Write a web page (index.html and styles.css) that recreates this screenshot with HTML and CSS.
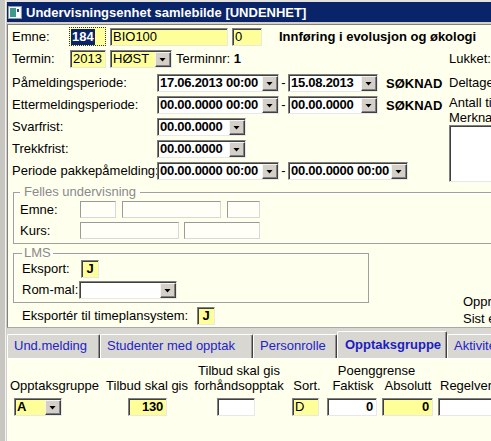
FILE: index.html
```html
<!DOCTYPE html>
<html lang="no">
<head>
<meta charset="utf-8">
<title>Undervisningsenhet samlebilde</title>
<link rel="stylesheet" href="styles.css">
</head>
<body>
<div class="win">
  <div class="titlebar">
    <svg class="ticon" width="14" height="13" viewBox="0 0 14 13">
      <rect x="0.5" y="0.5" width="13" height="12" fill="#f4f4f4" stroke="#8c9aa8"/>
      <rect x="2" y="2" width="6" height="9" fill="#3f9a8e"/>
      <rect x="8" y="2" width="4" height="9" fill="#ffffff"/>
      <rect x="9" y="3" width="2" height="3" fill="#24489c"/>
    </svg>
    <span class="ttl">Undervisningsenhet samlebilde [UNDENHET]</span>
  </div>

  <div class="upper">
    <div class="row h19">
      <span class="lbl w57">Emne:</span>
      <div class="fld yel focus w37"><span class="sel">184</span></div>
      <div class="fld yel reg w118 ml4">BIO100</div>
      <div class="fld yel reg w30 ml4">0</div>
      <span class="heading">Innføring i evolusjon og økologi</span>
    </div>

    <div class="cols">
      <div class="leftcol">
        <div class="row">
          <span class="lbl w58">Termin:</span>
          <div class="fld yel reg w36">2013</div>
          <div class="fld yel reg combo w62 ml4"><span class="val">HØST</span><span class="btn"></span></div>
          <span class="lbl ml4">Terminnr: <b>1</b></span>
        </div>
        <div class="row mt6">
          <span class="lbl w145">Påmeldingsperiode:</span>
          <div class="fld combo w122"><span class="val">17.06.2013 00:00</span><span class="btn"></span></div>
          <span class="dash">-</span>
          <div class="fld combo w90"><span class="val">15.08.2013</span><span class="btn"></span></div>
          <b class="status">SØKNAD</b>
        </div>
        <div class="row mt4">
          <span class="lbl w145">Ettermeldingsperiode:</span>
          <div class="fld combo w122"><span class="val">00.00.0000 00:00</span><span class="btn"></span></div>
          <span class="dash">-</span>
          <div class="fld combo w90"><span class="val">00.00.0000</span><span class="btn"></span></div>
          <b class="status">SØKNAD</b>
        </div>
        <div class="row mt4">
          <span class="lbl w145">Svarfrist:</span>
          <div class="fld combo w89"><span class="val">00.00.0000</span><span class="btn"></span></div>
        </div>
        <div class="row mt4">
          <span class="lbl w145">Trekkfrist:</span>
          <div class="fld combo w89"><span class="val">00.00.0000</span><span class="btn"></span></div>
        </div>
        <div class="row mt4">
          <span class="lbl w145">Periode pakkepåmelding:</span>
          <div class="fld combo w122"><span class="val">00.00.0000 00:00</span><span class="btn"></span></div>
          <span class="dash">-</span>
          <div class="fld combo w120"><span class="val">00.00.0000 00:00</span><span class="btn"></span></div>
        </div>
      </div>
      <div class="rightcol">
        <div class="rline">Lukket:</div>
        <div class="rline mt6">Deltagere:</div>
        <div class="rline antall">Antall timer:</div>
        <div class="rline merk">Merknad:</div>
        <div class="memo"></div>
      </div>
    </div>

    <fieldset class="group felles">
      <legend>Felles undervisning</legend>
      <div class="row h17 mt2">
        <span class="lbl w60">Emne:</span>
        <div class="box w36"></div>
        <div class="box w99 ml6"></div>
        <div class="box w33 ml6"></div>
      </div>
      <div class="row h17 mt4">
        <span class="lbl w60">Kurs:</span>
        <div class="box w99"></div>
        <div class="box w76 ml5"></div>
      </div>
    </fieldset>

    <div class="bottomrow">
      <div class="lmsblock">
        <fieldset class="group lms">
          <legend>LMS</legend>
          <div class="row">
            <span class="lbl w59">Eksport:</span>
            <div class="fld yel flag">J</div>
          </div>
          <div class="row mt3">
            <span class="lbl w57">Rom-mal:</span>
            <div class="fld combo w98"><span class="val"></span><span class="btn"></span></div>
          </div>
        </fieldset>
        <div class="row mt4 export">
          <span class="lbl w175">Eksportér til timeplansystem:</span>
          <div class="fld yel flag">J</div>
        </div>
      </div>
      <div class="info">
        <div class="iline">Opprettet:</div>
        <div class="iline">Sist endret:</div>
      </div>
    </div>
  </div>

  <div class="tabs">
    <div class="tab t1">Und.melding</div>
    <div class="tab t2">Studenter med opptak</div>
    <div class="tab t3">Personrolle</div>
    <div class="tab t4 active">Opptaksgruppe</div>
    <div class="tab t5">Aktiviteter</div>
  </div>

  <div class="lower">
    <div class="grid">
      <div class="hd c3 r1">Tilbud skal gis</div>
      <div class="hd c56 r1">Poenggrense</div>

      <div class="hd c1 r2 left">Opptaksgruppe</div>
      <div class="hd c2 r2 right">Tilbud skal gis</div>
      <div class="hd c3 r2">forhåndsopptak</div>
      <div class="hd c4 r2">Sort.</div>
      <div class="hd c5 r2">Faktisk</div>
      <div class="hd c6 r2">Absolutt</div>
      <div class="hd c7 r2 left reg-hd">Regelverk</div>

      <div class="cell c1 r3"><div class="fld yel combo wA"><span class="val">A</span><span class="btn"></span></div></div>
      <div class="cell c2 r3"><div class="fld yel num w39 ml24">130</div></div>
      <div class="cell c3 r3"><div class="fld white w38 ml27"></div></div>
      <div class="cell c4 r3"><div class="fld yel reg w27 ml4">D</div></div>
      <div class="cell c5 r3"><div class="fld white num w50 ml1">0</div></div>
      <div class="cell c6 r3"><div class="fld yel num w51 ml2">0</div></div>
      <div class="cell c7 r3"><div class="fld white w80 ml2"></div></div>
    </div>
  </div>
</div>
</body>
</html>
```

FILE: styles.css
```css
html, body {
  margin: 0;
  padding: 0;
}

body {
  width: 491px;
  height: 441px;
  overflow: hidden;
  padding-left: 5px;
  box-sizing: border-box;
  background: #c8c6c0;
  font-family: "Liberation Sans", Arial, sans-serif;
  font-size: 13px;
  color: #000;
}

.win {
  width: 640px;
  height: 441px;
  box-sizing: border-box;
  background: #d4d0c8;
  border-left: 1px solid #f4f3ee;
  border-top: 2px solid #e4e2dc;
  padding-left: 1px;
  display: flex;
  flex-direction: column;
}

/* ---------- title bar ---------- */
.titlebar {
  height: 20px;
  flex: none;
  background: #0a246a;
  display: flex;
  align-items: center;
  padding-left: 1px;
}
.ticon {
  flex: none;
  display: block;
}
.ttl {
  margin-left: 4px;
  color: #fff;
  font-weight: bold;
  white-space: nowrap;
}

/* ---------- upper panel ---------- */
.upper {
  flex: none;
  margin-top: 2px;
  background: #ffffee;
  border-top: 1px solid #808080;
  border-left: 1px solid #808080;
  border-bottom: 1px solid #a8a8a8;
  padding: 2px 0 2px 4px;
}

.row {
  display: flex;
  align-items: center;
  height: 18px;
}
.h19 { height: 19px; }
.h17 { height: 17px; }
.mt2 { margin-top: 2px; }
.mt3 { margin-top: 3px; }
.mt4 { margin-top: 4px; }
.mt6 { margin-top: 6px; }
.ml1 { margin-left: 1px; }
.ml2 { margin-left: 2px; }
.ml4 { margin-left: 4px; }
.ml5 { margin-left: 5px; }
.ml6 { margin-left: 6px; }
.ml24 { margin-left: 24px; }
.ml27 { margin-left: 27px; }

.lbl {
  flex: none;
  white-space: nowrap;
  line-height: 18px;
}
.w57 { width: 57px; }
.w58 { width: 58px; }
.w59 { width: 59px; }
.w60 { width: 60px; }
.w145 { width: 145px; }
.w175 { width: 175px; }

/* fields */
.fld {
  flex: none;
  box-sizing: border-box;
  height: 18px;
  display: flex;
  align-items: center;
  padding-left: 2px;
  background: #ffffff;
  border: 1px solid;
  border-color: #808080 #e8e8e8 #e8e8e8 #808080;
  box-shadow: inset 1px 1px 0 #404040;
  font-weight: bold;
  letter-spacing: -0.25px;
  white-space: nowrap;
  overflow: hidden;
  line-height: 16px;
}
.fld.reg { font-weight: normal; letter-spacing: 0; }
.yel { background: #ffff99; }
.white { background: #ffffff; }
.num { justify-content: flex-end; padding-right: 3px; }

.focus {
  border: 1px dotted #333;
  box-shadow: none;
  padding-left: 1px;
  height: 19px;
  letter-spacing: 0;
}
.sel {
  background: #0a246a;
  color: #fff;
  padding: 0 1px;
  line-height: 16px;
}

.w27 { width: 27px; }
.w30 { width: 30px; }
.w33 { width: 33px; }
.w36 { width: 36px; }
.w37 { width: 37px; }
.w38 { width: 38px; }
.w39 { width: 39px; }
.w50 { width: 50px; }
.w51 { width: 51px; }
.w62 { width: 62px; }
.w76 { width: 76px; }
.w80 { width: 80px; }
.w89 { width: 89px; }
.w90 { width: 90px; }
.w98 { width: 98px; }
.w99 { width: 99px; }
.w118 { width: 118px; }
.w120 { width: 120px; }
.w122 { width: 122px; }
.wA { width: 48px; margin-left: 4px; }

.combo {
  padding-right: 0;
}
.combo .val {
  flex: 1;
  overflow: hidden;
}
.btn {
  flex: none;
  box-sizing: border-box;
  width: 16px;
  height: 15px;
  margin-right: 0;
  margin-top: 1px;
  background: #d4d0c8;
  border: 1px solid;
  border-color: #f4f4f4 #404040 #404040 #f4f4f4;
  box-shadow: inset -1px -1px 0 #808080;
  display: flex;
  align-items: center;
  justify-content: center;
}
.btn::after {
  content: "";
  width: 7px;
  height: 4px;
  background: #000;
  clip-path: polygon(0 0, 100% 0, 50% 100%);
  margin-right: 1px;
}

.flag {
  width: 18px;
  justify-content: center;
  padding-left: 0;
}

.heading {
  margin-left: 17px;
  font-weight: bold;
  white-space: nowrap;
}

.dash {
  flex: none;
  width: 9px;
  text-align: center;
  line-height: 18px;
}
.status {
  margin-left: 8px;
  white-space: nowrap;
}

.cols {
  display: flex;
  margin-top: 4px;
}
.leftcol {
  width: 437px;
  flex: none;
}
.rightcol {
  flex: none;
  width: 120px;
}
.rline {
  line-height: 18px;
  height: 18px;
  white-space: nowrap;
}
.rline.antall {
  margin-top: 4px;
  height: 14px;
  line-height: 14px;
}
.rline.merk {
  margin-top: 1px;
  height: 14px;
  line-height: 14px;
}
.memo {
  margin-top: 0;
  height: 57px;
  width: 110px;
  box-sizing: border-box;
  background: #fff;
  border: 1px solid;
  border-color: #808080 #e8e8e8 #e8e8e8 #808080;
  box-shadow: inset 1px 1px 0 #404040;
}

/* group boxes */
.group {
  margin: 0 0 0 1px;
  border: 1px solid #a0a0a0;
  box-shadow: inset 1px 1px 0 #ffffff;
  min-width: 0;
}
.group legend {
  color: #8a8a8a;
  line-height: 14px;
  padding: 0 4px;
  font-size: 13px;
}
.felles {
  margin-top: 3px;
  padding: 0 0 4px 6px;
}
.lms {
  width: 356px;
  box-sizing: border-box;
  padding: 0 0 3px 8px;
}
.lms legend {
  padding: 0 2px;
}

.box {
  flex: none;
  box-sizing: border-box;
  height: 17px;
  background: #fffff8;
  border: 1px solid;
  border-color: #9a9a9a #d8d8d8 #d8d8d8 #9a9a9a;
}

.bottomrow {
  display: flex;
  margin-top: 2px;
}
.lmsblock {
  width: 357px;
  flex: none;
}
.export {
  margin-left: 10px;
}
.info {
  margin-left: 94px;
  align-self: flex-end;
  margin-bottom: -2px;
}
.iline {
  line-height: 17px;
  white-space: nowrap;
}

/* ---------- tabs ---------- */
.tabs {
  flex: none;
  height: 30px;
  display: flex;
  align-items: flex-end;
  background: #d9d7d1;
}
.tab {
  flex: none;
  box-sizing: border-box;
  height: 24px;
  line-height: 22px;
  padding-left: 6px;
  color: #2323c8;
  white-space: nowrap;
  overflow: hidden;
  border-top: 1px solid #ffffff;
  border-left: 1px solid #ffffff;
  border-right: 1px solid #404040;
  box-shadow: inset -1px 0 0 #909090;
  border-radius: 2px 2px 0 0;
}
.tab.active {
  height: 27px;
  line-height: 25px;
  padding-left: 7px;
  font-weight: bold;
  color: #1c1cc4;
}
.t1 { width: 93px; }
.t2 { width: 153px; }
.t3 { width: 84px; }
.t4 { width: 110px; }
.t5 { width: 120px; }

/* ---------- lower panel ---------- */
.lower {
  flex: 1;
  background: #ffffee;
  border-top: 1px solid #ffffff;
  border-left: 1px solid #ffffff;
  padding: 4px 0 0 2px;
}
.grid {
  display: grid;
  grid-template-columns: 94px 86px 98px 38px 54px 56px 140px;
  grid-template-rows: 15px 15px 23px;
}
.hd {
  line-height: 15px;
  white-space: nowrap;
  text-align: center;
}
.hd.left { text-align: left; }
.hd.right { text-align: right; padding-right: 2px; }
.reg-hd { padding-left: 4px; }
.cell {
  display: flex;
  align-items: flex-end;
}
.c1 { grid-column: 1; }
.c2 { grid-column: 2; }
.c3 { grid-column: 3; }
.c4 { grid-column: 4; }
.c5 { grid-column: 5; }
.c6 { grid-column: 6; }
.c7 { grid-column: 7; }
.c56 { grid-column: 5 / span 2; padding-right: 9px; }
.r1 { grid-row: 1; }
.r2 { grid-row: 2; }
.r3 { grid-row: 3; }
```
